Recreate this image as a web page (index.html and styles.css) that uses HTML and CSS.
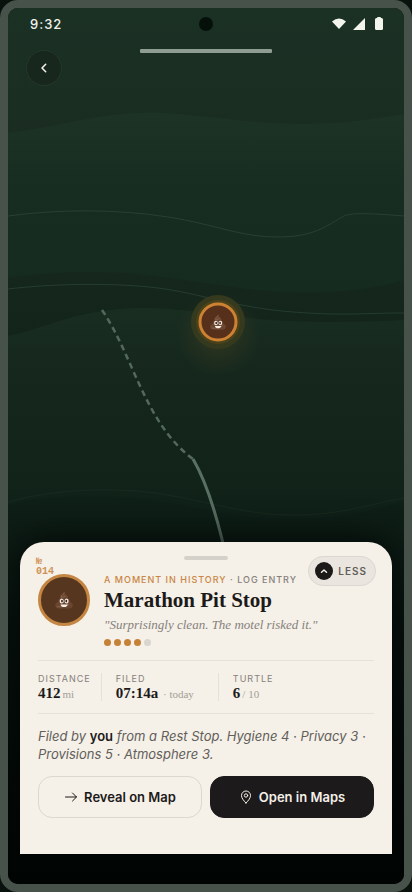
FILE: index.html
```html
<!DOCTYPE html>
<html lang="en">
<head>
<meta charset="utf-8">
<meta name="viewport" content="width=device-width, initial-scale=1">
<title>Marathon Pit Stop</title>
<link rel="stylesheet" href="styles.css">
</head>
<body>
<svg class="defs" aria-hidden="true">
  <symbol id="pile" viewBox="0 0 20 20">
    <path d="M10.2 1.5C9 4.2 5.900 4.500 5.900 7.200c0 .6.1 1 .3 1.400C4.500 9 3.700 10.200 4.200 12 2.400 12.400 1.200 13.600 1.200 15.300 1.200 17.400 3 18.500 5.200 18.500h9.600c2.200 0 4-1.100 4-3.200 0-1.700-1.200-2.900-3-3.300.5-1.800-.3-3-2-3.400.6-2-.4-3-1.600-3.700-1.100-.7-1.700-1.700-2-3.400z" fill="#6a4630"/>
    <path d="M10.300 2.500c-.5 2-2.800 2.700-3.200 4.500 2 .5 4.200 0 4.700-1.600M5.200 12c2.500.6 6.500.2 8.300-2.200M2.700 16.600c4 .6 9 .2 12.500-2.600" fill="none" stroke="#8c6951" stroke-width=".8"/>
    <ellipse cx="7.700" cy="11" rx="2" ry="2.500" fill="#f7eee5"/>
    <ellipse cx="12.600" cy="11" rx="2" ry="2.500" fill="#f7eee5"/>
    <ellipse cx="8" cy="11.100" rx=".9" ry="1.300" fill="#352219"/>
    <ellipse cx="12.300" cy="11.100" rx=".9" ry="1.300" fill="#352219"/>
    <path d="M6.500 14.400h7.200c-.4 1.800-1.900 2.600-3.600 2.600s-3.200-.8-3.600-2.600z" fill="#f7eee5"/>
  </symbol>
</svg>
<div class="phone">
  <svg class="map" viewBox="0 0 396 876" preserveAspectRatio="xMidYMin slice" aria-hidden="true">
    <defs>
      <linearGradient id="land" x1="0" y1="0" x2="0" y2="1">
        <stop offset="0" stop-color="#1b3124"/>
        <stop offset=".2" stop-color="#1a2b20"/>
        <stop offset=".4" stop-color="#12231a"/>
        <stop offset=".56" stop-color="#0f2018"/>
        <stop offset=".7" stop-color="#07110d"/>
        <stop offset="1" stop-color="#010504"/>
      </linearGradient>
      <linearGradient id="ridge" x1="0" y1="0" x2="0" y2="1">
        <stop offset="0" stop-color="#1c3325"/>
        <stop offset=".4" stop-color="#182d21"/>
        <stop offset="1" stop-color="#162b1f"/>
      </linearGradient>
      <linearGradient id="valley" x1="0" y1="0" x2="0" y2="1">
        <stop offset="0" stop-color="#192d21"/>
        <stop offset=".4" stop-color="#15261c"/>
        <stop offset=".8" stop-color="#12231a"/>
        <stop offset="1" stop-color="#0f2018"/>
      </linearGradient>
      <linearGradient id="trail" x1="0" y1="0" x2="0" y2="1">
        <stop offset="0" stop-color="#5a7264"/>
        <stop offset="1" stop-color="#52665a"/>
      </linearGradient>
      <radialGradient id="glow">
        <stop offset="0" stop-color="#b77527" stop-opacity=".18"/>
        <stop offset=".6" stop-color="#b77527" stop-opacity=".06"/>
        <stop offset="1" stop-color="#b77527" stop-opacity="0"/>
      </radialGradient>
    </defs>
    <rect width="396" height="876" fill="url(#land)"/>
    <path d="M0 125C60 118 100 100 170 106S290 125 396 106V272C320 294 240 282 190 274S80 258 0 270Z" fill="url(#ridge)"/>
    <path d="M0 328C40 320 70 300 135 300S240 320 396 312V493C300 522 240 510 190 500S70 480 0 496Z" fill="url(#valley)"/>
    <g fill="none" stroke="#4d725c" stroke-opacity=".3">
      <path d="M0 208C50 201 110 201 160 209S232 229 270 229C306 229 318 218 336 208C344 204 370 206 396 208"/>
      <path d="M0 281C50 275 110 275 150 280S230 300 285 304S350 305 396 305"/>
      <path d="M0 494C45 481 110 478 160 487S240 507 285 507S350 499 396 490" stroke-opacity=".1"/>
    </g>
    <path d="M94 302C125 347 137 416 185 451" fill="none" stroke="#53695c" stroke-width="2.500" stroke-dasharray="6 4"/>
    <path d="M185 451Q205 485 221 562" fill="none" stroke="url(#trail)" stroke-width="3"/>
    <circle cx="210" cy="326" r="42" fill="url(#glow)"/>
    <circle cx="210" cy="314" r="27" fill="#353a1e"/>
    <circle cx="210" cy="314" r="22" fill="#4b421a"/>
    <circle cx="210" cy="314" r="18" fill="#57301b" stroke="#cc8232" stroke-width="3"/>
    <use href="#pile" x="201" y="305" width="18" height="18"/>
  </svg>

  <header class="status">
    <span class="time">9:32</span>
    <span class="camera"></span>
    <svg class="signals" width="54" height="14" viewBox="0 0 54 14" fill="#f3f5ed" aria-label="Wi-Fi, signal and battery">
      <path d="M0 4.500Q7-1.500 14 4.500L7 12z"/>
      <path d="M33 1v12H21z"/>
      <rect x="43" y="1" width="8" height="12" rx="1.500"/><rect x="45" y="0" width="4" height="3" rx="1"/>
    </svg>
  </header>
  <div class="topbar">
    <button class="back" aria-label="Back"><svg width="12" height="12" viewBox="0 0 12 12"><path d="M7.700 2.200 4 6l3.700 3.800"/></svg></button>
    <span class="progress"></span>
  </div>

  <main class="card">
    <span class="handle"></span>
    <button class="less"><span class="less-dot"><svg width="8" height="8" viewBox="0 0 8 8"><path d="M1.500 5.200 4 3l2.500 2.200"/></svg></span>LESS</button>
    <section class="intro">
      <div class="medal"><svg width="20" height="20"><use href="#pile"/></svg><span class="number">№ 014</span></div>
      <div class="intro-text">
        <p class="eyebrow"><span class="accent">A MOMENT IN HISTORY</span> · LOG ENTRY</p>
        <h1>Marathon Pit Stop</h1>
        <p class="quote">"Surprisingly clean. The motel risked it."</p>
        <div class="rating" role="img" aria-label="4 of 5"><i></i><i></i><i></i><i></i><i class="off"></i></div>
      </div>
    </section>
    <dl class="stats">
      <div><dt>DISTANCE</dt><dd>412<small>mi</small></dd></div>
      <div class="filed"><dt>FILED</dt><dd>07:14a<small> · today</small></dd></div>
      <div><dt>TURTLE</dt><dd>6<small>/ 10</small></dd></div>
    </dl>
    <p class="note">Filed by <strong>you</strong> from a Rest Stop. Hygiene 4 · Privacy 3 · Provisions 5 · Atmosphere 3.</p>
    <div class="actions">
      <button class="action"><svg width="14" height="14" viewBox="0 0 14 14"><path d="M1.500 7h11M8.500 3l4 4-4 4"/></svg>Reveal on Map</button>
      <button class="action dark"><svg width="14" height="14" viewBox="0 0 14 14"><path d="M7 13C4.500 10.500 2.500 8 2.500 5.500a4.500 4.500 0 0 1 9 0C11.500 8 9.500 10.500 7 13z"/><circle cx="7" cy="5.500" r="1.700"/></svg>Open in Maps</button>
    </div>
  </main>
</div>
</body>
</html>
```
FILE: styles.css
```css
* { box-sizing: border-box; }
body { margin: 0; background: #09120d; font-family: Inter, sans-serif; color: #1c1a19; }
p, h1, dl, dd { margin: 0; }
button { font: inherit; color: inherit; padding: 0; cursor: pointer; }
svg { display: block; flex: none; }
.defs { position: absolute; width: 0; height: 0; }
.phone {
  position: relative;
  display: flex;
  flex-direction: column;
  min-height: 100vh;
  border: 8px solid #47524b;
  border-radius: 18px;
  overflow: hidden;
  background: #010504;
}
.map { position: absolute; inset: 0; width: 100%; height: 100%; }
.status {
  position: relative;
  display: grid;
  grid-template-columns: 1fr 14px 1fr;
  align-items: center;
  height: 32px;
  padding: 0 20px 0 22px;
  margin-right: 2px;
  color: #f0f3ec;
}
.time { font-size: 13px; font-weight: 500; letter-spacing: 1px; }
.camera { width: 14px; height: 14px; border-radius: 50%; background: #06100b; }
.signals { justify-self: end; margin-right: -4px; }
.topbar { position: relative; padding: 10px 18px; }
.back {
  display: grid;
  place-items: center;
  width: 36px;
  height: 36px;
  border: 1px solid #24382b;
  border-radius: 50%;
  background: #17271d;
}
.back svg, .less svg, .action svg { fill: none; stroke: currentColor; stroke-linecap: round; stroke-linejoin: round; }
.back svg { color: #f3f5ed; stroke-width: 1.500; }
.progress { position: absolute; top: 9px; left: 33.333%; right: 33.333%; height: 4px; border-radius: 1px; background: #8e9c91; }

.card {
  position: relative;
  margin: auto 12px 30px;
  padding: 14px 18px 36px;
  border-radius: 24px 24px 0 0;
  background: #f5f0e8;
  box-shadow: 0 -6px 32px rgba(0, 0, 0, .6);
}
.handle { display: block; width: 44px; height: 4px; margin: 0 auto 14px; border-radius: 2px; background: #d4d0ca; }
.less {
  position: absolute;
  top: 14px;
  right: 16px;
  display: flex;
  align-items: center;
  gap: 5px;
  height: 30px;
  padding: 0 8px 0 6px;
  border: 1px solid #dcd7d0;
  border-radius: 15px;
  background: #eae5de;
  color: #625e5a;
  font-size: 10px;
  font-weight: 600;
  letter-spacing: 1px;
}
.less-dot { display: grid; place-items: center; width: 18px; height: 18px; border-radius: 50%; background: #1c1a19; color: #f5f0e8; }
.less svg { stroke-width: 1.500; }
.intro { display: flex; gap: 14px; padding-bottom: 14px; }
.medal {
  position: relative;
  display: grid;
  place-items: center;
  flex: none;
  width: 52px;
  height: 52px;
  border: 3px solid #c58642;
  border-radius: 50%;
  background: #573620;
}
.number {
  position: absolute;
  top: -20px;
  left: -5px;
  width: 24px;
  color: #cf9254;
  font: bold 10px/10px "Liberation Mono", monospace;
}
.eyebrow { font-size: 9px; line-height: 12px; font-weight: 500; letter-spacing: 1px; color: #85817b; white-space: nowrap; }
.accent { color: #c98643; }
h1 { font: bold 21px/28px "Liberation Serif", serif; }
.quote { margin-top: 2px; font: italic 13px/18px "Liberation Serif", serif; color: #85817b; }
.rating { display: flex; gap: 3px; margin-top: 5px; }
.rating i { width: 7px; height: 7px; border-radius: 50%; background: #c58236; }
.rating .off { background: #d9d5cf; }
.stats { display: flex; padding: 12px 0; border: solid #e5e0d9; border-width: 1px 0; }
.stats div { padding-right: 10px; height: 28px; }
.stats div + div { padding-left: 14px; border-left: 1px solid #e5e0d9; }
.stats .filed { padding-right: 24px; }
dt { font-size: 9px; line-height: 12px; font-weight: 400; letter-spacing: 1px; color: #85817b; }
dd { font: bold 15px/16px "Liberation Serif", serif; }
small { margin-left: 2px; font-size: 11px; font-weight: 400; color: #a39e97; }
.note { margin: 13px 0; font-size: 13px; line-height: 18px; font-style: italic; color: #625e5a; }
.note strong { font-style: normal; font-weight: 600; color: #1c1a19; }
.actions { display: grid; grid-template-columns: 1fr 1fr; gap: 8px; }
.action {
  display: flex;
  align-items: center;
  justify-content: center;
  gap: 6px;
  height: 42px;
  border: 1px solid #dcd7d0;
  border-radius: 14px;
  background: #f5f0e8;
  font-size: 13px;
  font-weight: 600;
}
.dark { border-color: #1c1a1b; background: #1c1a1b; color: #f5f0e8; }
```
